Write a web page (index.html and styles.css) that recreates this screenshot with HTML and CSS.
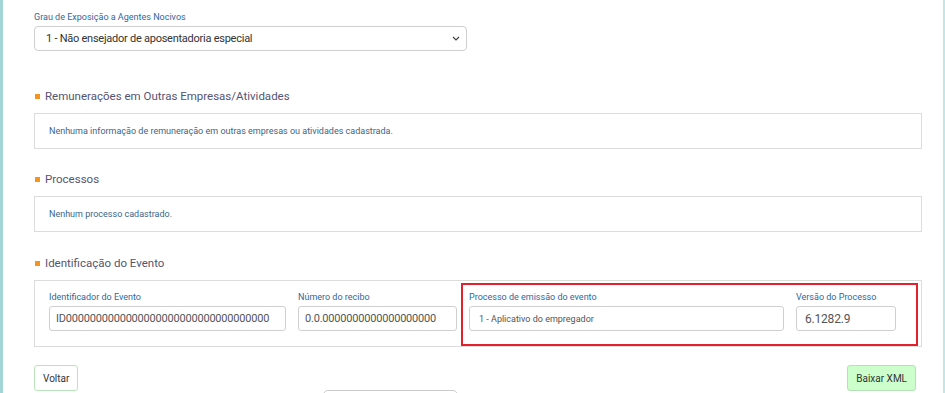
FILE: index.html
```html
<!DOCTYPE html>
<html lang="pt-BR">
<head>
<meta charset="utf-8">
<title>Evento</title>
<link rel="stylesheet" href="styles.css">
</head>
<body>
<div class="frame">
  <div class="top-field">
    <div class="label">Grau de Exposição a Agentes Nocivos</div>
    <div class="select">
      <span>1 - Não ensejador de aposentadoria especial</span>
      <svg class="chevron" width="8" height="5" viewBox="0 0 8 5"><path d="M1 1l3 3 3-3" fill="none" stroke="#444" stroke-width="1.2"/></svg>
    </div>
  </div>

  <section class="section section-first">
    <h2 class="heading"><span class="bullet"></span>Remunerações em Outras Empresas/Atividades</h2>
    <div class="panel"><p class="empty">Nenhuma informação de remuneração em outras empresas ou atividades cadastrada.</p></div>
  </section>

  <section class="section">
    <h2 class="heading"><span class="bullet"></span>Processos</h2>
    <div class="panel"><p class="empty">Nenhum processo cadastrado.</p></div>
  </section>

  <section class="section section-last">
    <h2 class="heading"><span class="bullet"></span>Identificação do Evento</h2>
    <div class="panel panel-form">
      <div class="form-grid">
        <div class="field">
          <div class="label">Identificador do Evento</div>
          <div class="input">ID0000000000000000000000000000000000</div>
        </div>
        <div class="field">
          <div class="label">Número do recibo</div>
          <div class="input">0.0.0000000000000000000</div>
        </div>
        <div class="highlight">
          <div class="field">
            <div class="label">Processo de emissão do evento</div>
            <div class="input input-small">1 - Aplicativo do empregador</div>
          </div>
          <div class="field">
            <div class="label">Versão do Processo</div>
            <div class="input input-version">6.1282.9</div>
          </div>
        </div>
      </div>
    </div>
  </section>

  <div class="actions">
    <button class="btn btn-light">Voltar</button>
    <button class="btn btn-green">Baixar XML</button>
  </div>
  <div class="stub"></div>
</div>
</body>
</html>
```
FILE: styles.css
```css
html, body {
  margin: 0;
  padding: 0;
  height: 393px;
  overflow: hidden;
  background: #fff;
}
body {
  font-family: Roboto, "Liberation Sans", sans-serif;
}
.frame {
  box-sizing: border-box;
  width: 945px;
  height: 393px;
  border-left: 3px solid #a3d5d6;
  border-right: 2px solid #c2e5e5;
  padding: 11px 21px 0 31px;
  overflow: hidden;
}
.label {
  font-size: 9px;
  line-height: 13px;
  color: #2f67a0;
  white-space: nowrap;
}
.top-field .label {
  margin-bottom: 2px;
}
.select {
  box-sizing: border-box;
  width: 433px;
  height: 25px;
  border: 1px solid #cfcfcf;
  border-radius: 4px;
  padding: 0 6px 0 11px;
  display: flex;
  align-items: center;
  justify-content: space-between;
  font-size: 11px;
  letter-spacing: -0.25px;
  color: #333;
}
.chevron {
  display: block;
}
.section { margin-top: 22px; }
.section-first { margin-top: 37px; }
.section-last { margin-top: 23px; }
.heading {
  margin: 0 0 9px 0;
  font-size: 11.5px;
  line-height: 16px;
  font-weight: 400;
  color: #545473;
  display: flex;
  align-items: center;
}
.bullet {
  width: 5px;
  height: 5px;
  background: #f7941d;
  margin: 0 5px 0 1px;
}
.panel {
  border: 1px solid #dcdcdc;
  padding: 11px 14px;
}
.empty {
  margin: 0;
  font-size: 9px;
  line-height: 12px;
  color: #3b6688;
}
.panel-form {
  padding: 10px 25px 15px 14px;
}
.form-grid {
  display: grid;
  grid-template-columns: 237px 159px 427px;
  column-gap: 12px;
}
.field .label {
  line-height: 12px;
  margin-bottom: 3px;
}
.input {
  box-sizing: border-box;
  height: 25px;
  border: 1px solid #cfcfcf;
  border-radius: 3px;
  padding: 0 6px;
  display: flex;
  align-items: center;
  font-size: 11px;
  letter-spacing: -0.2px;
  color: #555;
  white-space: nowrap;
  overflow: hidden;
}
.input-small {
  font-size: 9px;
  letter-spacing: 0;
  padding-left: 9px;
}
.input-version {
  font-size: 12px;
  padding-left: 8px;
}
.highlight {
  position: relative;
  display: grid;
  grid-template-columns: 315px 100px;
  column-gap: 12px;
}
.highlight::after {
  content: "";
  position: absolute;
  left: -8px;
  right: -22px;
  top: -8px;
  bottom: -15px;
  border: 2px solid #e3202b;
  pointer-events: none;
}
.actions {
  margin-top: 18px;
  padding-right: 6px;
  display: flex;
  justify-content: space-between;
}
.btn {
  box-sizing: border-box;
  height: 26px;
  border: 1px solid #b9e3b9;
  border-radius: 3px;
  padding: 0 8px;
  font-family: Roboto, "Liberation Sans", sans-serif;
  font-size: 10px;
  color: #333;
  background: #fff;
}
.btn-green {
  background: #ccffcc;
  border-color: #b4e2b4;
}
.stub {
  margin: -1px 0 0 289px;
  width: 135px;
  height: 20px;
  box-sizing: border-box;
  border: 1px solid #cccccc;
  border-radius: 5px;
}
```
